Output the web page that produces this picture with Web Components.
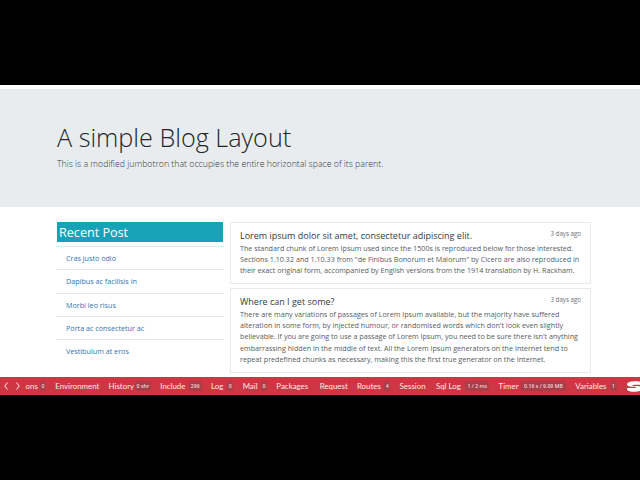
<!DOCTYPE html>
<html><head><meta charset="utf-8"><style>
html,body{margin:0;padding:0;background:#000;}
body{width:640px;height:480px;overflow:hidden;font-family:"Open Sans","Liberation Sans",sans-serif;}
</style></head><body>
<blog-screen>
<blog-jumbo slot="top" heading="A simple Blog Layout">This is a modified jumbotron that occupies the entire horizontal space of its parent.</blog-jumbo>
<recent-list slot="side" heading="Recent Post">
<a>Cras justo odio</a><a>Dapibus ac facilisis in</a><a>Morbi leo risus</a><a>Porta ac consectetur ac</a><a>Vestibulum at eros</a>
</recent-list>
<post-card slot="main" heading="Lorem ipsum dolor sit amet, consectetur adipiscing elit." when="3 days ago"><span>The standard chunk of Lorem Ipsum used since the 1500s is reproduced below for those interested.</span><span>Sections 1.10.32 and 1.10.33 from "de Finibus Bonorum et Malorum" by Cicero are also reproduced in</span><span>their exact original form, accompanied by English versions from the 1914 translation by H. Rackham.</span></post-card>
<post-card slot="main" heading="Where can I get some?" when="3 days ago"><span>There are many variations of passages of Lorem Ipsum available, but the majority have suffered</span><span>alteration in some form, by injected humour, or randomised words which don't look even slightly</span><span>believable. If you are going to use a passage of Lorem Ipsum, you need to be sure there isn't anything</span><span>embarrassing hidden in the middle of text. All the Lorem Ipsum generators on the Internet tend to</span><span>repeat predefined chunks as necessary, making this the first true generator on the Internet.</span></post-card>
<debug-bar slot="bar"></debug-bar>
</blog-screen>
<script>
function def(name,html,setup){
  customElements.define(name,class extends HTMLElement{
    constructor(){super();const r=this.attachShadow({mode:"open"});r.innerHTML=html;}
    connectedCallback(){if(setup)setup(this,this.shadowRoot);}
  });
}
def("blog-screen",`<style>
:host{display:flex;flex-direction:column;width:640px;height:480px;background:#000;overflow:hidden}
.topb{height:85px;flex:none}
.page{height:292px;flex:none;background:#fff;padding-top:4px;box-sizing:border-box;overflow:hidden}
.row{display:flex;padding:15px 49px 0 57px;gap:7px;align-items:flex-start}
.side{width:166px;flex:none}
.main{width:361px;flex:none;display:flex;flex-direction:column;gap:4.3px}
</style><div class="topb"></div><div class="page"><slot name="top"></slot><div class="row"><div class="side"><slot name="side"></slot></div><div class="main"><slot name="main"></slot></div></div></div><slot name="bar"></slot>`);
def("blog-jumbo",`<style>
:host{display:block;height:118px;background:#e9ecef;padding:29px 0 0 57px;box-sizing:border-box}
h1{margin:0;font:300 25.2px/38px "Open Sans",sans-serif;color:#212529}
p{margin:1px 0 0;font:300 8.76px/14px "Open Sans",sans-serif;color:#343a40}
</style><h1></h1><p><slot></slot></p>`,(h,r)=>{r.querySelector("h1").textContent=h.getAttribute("heading")});
def("recent-list",`<style>
:host{display:block}
h4{margin:0;height:20px;background:#17a2b8;color:#fff;font:400 12.6px/22px "Open Sans",sans-serif;padding-left:2px}
ul{list-style:none;margin:4px -1px 0;padding:0}
li{border-top:1px solid #e4e7ea;padding-left:10px;font:400 7.2px/22px "Open Sans",sans-serif;color:#2f74b5;height:22.3px}
</style><h4></h4><ul></ul>`,(h,r)=>{r.querySelector("h4").textContent=h.getAttribute("heading");
 const u=r.querySelector("ul");[...h.children].forEach(c=>{const l=document.createElement("li");l.textContent=c.textContent;u.appendChild(l)});});
def("post-card",`<style>
:host{display:block;border:1px solid #e8e9ea;padding:5.5px 9px 6px;background:#fff;box-sizing:border-box}
.head{display:flex;justify-content:space-between;align-items:flex-start}
h5{margin:0;font:400 9px/13px "Open Sans",sans-serif;color:#343a40}
small{font:400 6.2px/10px "Open Sans",sans-serif;color:#6a7076}
.b{font:400 7.18px/11.4px "Open Sans",sans-serif;color:#555b61;margin-top:1px;white-space:nowrap}
::slotted(span){display:block}
</style><div class="head"><h5></h5><small></small></div><div class="b"><slot></slot></div>`,(h,r)=>{r.querySelector("h5").textContent=h.getAttribute("heading");r.querySelector("small").textContent=h.getAttribute("when")});
const items=[["ons","0",12,6],["Environment",null,44],["History","0 xhr",24,16],["Include","296",26,13],["Log","0",14,6],["Mail","0",16,6],["Packages",null,34],["Request",null,28],["Routes","4",25,6],["Session",null,27],["Sql Log","1 / 2 ms",27,24],["Timer","0.16 s / 9.09 MB",20,45],["Variables","1",32,7]];
def("debug-bar",`<style>
:host{display:flex;align-items:center;height:18px;background:#ce3644;color:#fbe9ea;font:400 7.9px/18px Lato,"Open Sans",sans-serif;overflow:hidden;flex:none}
.nav{display:flex;align-items:center;gap:8px;padding-left:4px;margin-right:5.6px;width:16px}
.items{display:flex;align-items:center;flex:1}
.it{white-space:nowrap;margin-right:9.3px;display:flex;align-items:center;gap:2.4px}
.lb{display:block}
.bd{display:block;background:#a93e49;color:#f3d5d8;font:600 5.2px/10px "Open Sans",sans-serif;text-align:center;border-radius:2px}
svg{display:block;flex:none}
svg.logo{margin-right:1px}
</style><div class="nav"><svg width="4" height="8" viewBox="0 0 4 8"><path d="M3.500 .5 .8 4l2.700 3.500" fill="none" stroke="#fbe9ea"/></svg><svg width="4" height="8" viewBox="0 0 4 8"><path d="M.5 .5 3.200 4 .5 7.500" fill="none" stroke="#fbe9ea"/></svg></div><div class="items"></div><svg class="logo" width="16" height="11" viewBox="0 0 17 12"><path d="M1 3C2 1 6 .3 10 .3c3 0 5.500.4 7 1V4H9.500C8 4 6.500 4.300 6.500 4.800s2 .7 4 .7c3 0 5.500.3 6.500 1.500V10c-2 1.200-5 1.700-8 1.700C5 11.700 2 11 1 9.500V7.600h8.500c1 0 1.500-.3 1.500-.7s-1.500-.6-3.500-.6C4 6.300 .4 5.500 1 3Z" fill="#fff"/></svg>`,(h,r)=>{const w=r.querySelector(".items");
 items.forEach(([a,b,lw,bw])=>{const d=document.createElement("div");d.className="it";const s=document.createElement("span");s.className="lb";s.style.width=lw+"px";s.textContent=a;d.appendChild(s);if(b){const e=document.createElement("span");e.className="bd";e.style.width=bw+"px";e.textContent=b;d.appendChild(e)}w.appendChild(d)});});
</script>
</body></html>
